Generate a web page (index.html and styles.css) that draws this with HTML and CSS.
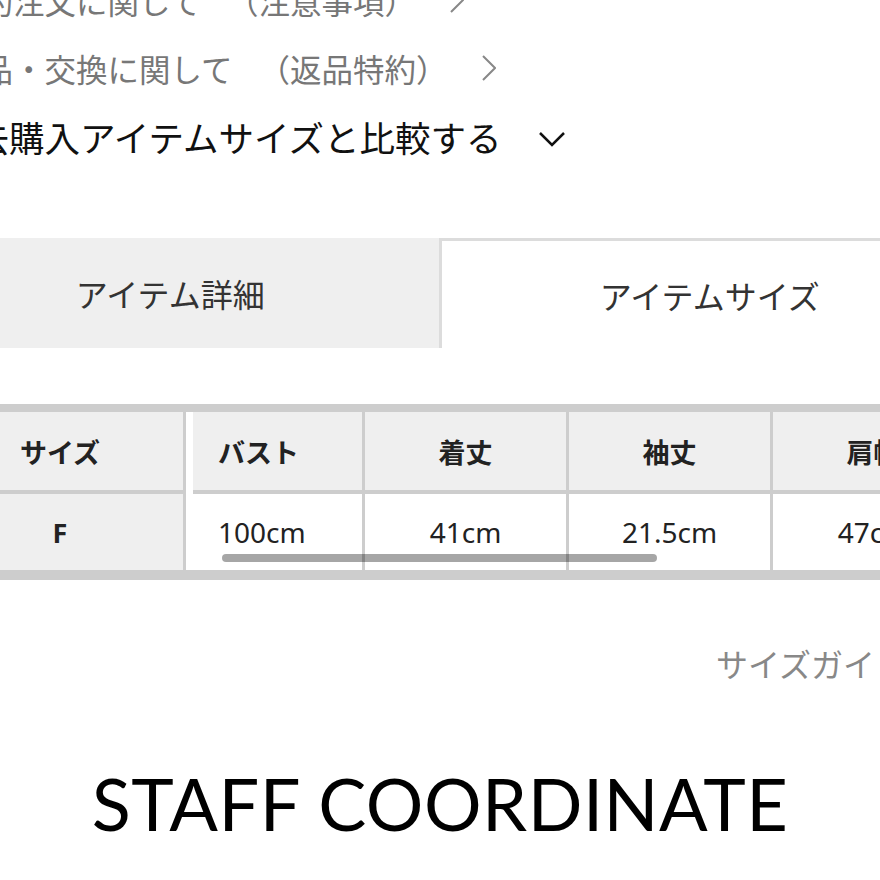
FILE: index.html
```html
<!DOCTYPE html>
<html lang="ja">
<head>
    <meta charset="UTF-8">
    <meta name="viewport" content="width=device-width, initial-scale=1.0">
    <title>アイテムサイズ</title>
    <link rel="stylesheet" href="styles.css">
</head>
<body>
    <div class="page">
        <!-- Notice links -->
        <ul class="notice-list">
            <li class="notice">
                <span>予約注文に関して</span><span class="note">（注意事項）</span>
                <svg class="chev-right" width="14" height="26" viewBox="0 0 14 26"><path d="M1 1 L13 13 L1 25" /></svg>
            </li>
            <li class="notice">
                <span>返品・交換に関して</span><span class="note">（返品特約）</span>
                <svg class="chev-right" width="14" height="26" viewBox="0 0 14 26"><path d="M1 1 L13 13 L1 25" /></svg>
            </li>
            <li class="notice compare">
                <span>過去購入アイテムサイズと比較する</span>
                <svg class="chev-down" width="26" height="15" viewBox="0 0 26 15"><path d="M1 1 L13 13 L25 1" /></svg>
            </li>
        </ul>

        <!-- Tabs -->
        <div class="tabs">
            <div class="tab">アイテム詳細</div>
            <div class="tab active">アイテムサイズ</div>
        </div>

        <!-- Size table -->
        <div class="size-table">
            <div class="fixed-col">
                <div class="cell head">サイズ</div>
                <div class="cell key">F</div>
            </div>
            <div class="scroll-cols">
                <div class="cell head first">バスト</div>
                <div class="cell head">着丈</div>
                <div class="cell head">袖丈</div>
                <div class="cell head">肩幅</div>
                <div class="cell head">身幅</div>

                <div class="cell first">100cm</div>
                <div class="cell">41cm</div>
                <div class="cell">21.5cm</div>
                <div class="cell">47cm</div>
                <div class="cell">50cm</div>
            </div>
            <div class="scrollbar"></div>
        </div>

        <div class="size-guide">
            <span>サイズガイド</span>
            <svg class="chev-right" width="14" height="26" viewBox="0 0 14 26"><path d="M1 1 L13 13 L1 25" /></svg>
        </div>

        <h2 class="section-title">STAFF COORDINATE</h2>
    </div>
</body>
</html>
```

FILE: styles.css
```css
html, body {
    margin: 0;
    overflow: hidden;
    background: #ffffff;
}

body {
    font-family: "Noto Sans", "Noto Sans CJK JP", sans-serif;
    color: #222;
}

.page {
    width: 1076px;
    margin-left: -98px;
    margin-top: -34px;
}

/* notice links */
.notice-list {
    list-style: none;
    margin: 0;
    padding: 0 0 0 48px;
}

.notice {
    display: flex;
    align-items: center;
    height: 68px;
    font-family: "Noto Sans CJK JP", sans-serif;
    font-size: 31.5px;
    color: #777;
    white-space: nowrap;
}

.notice .note {
    margin-left: 26px;
}

.notice .chev-right {
    margin-left: 34px;
}

.chev-right path {
    fill: none;
    stroke: #888;
    stroke-width: 2;
}

.notice.compare {
    margin-left: -12px;
    font-size: 35.5px;
    color: #111;
}

.chev-down {
    margin-left: 38px;
    margin-top: 6px;
}

.chev-down path {
    fill: none;
    stroke: #111;
    stroke-width: 2.5;
}

/* tabs */
.tabs {
    display: flex;
    margin-top: 68px;
    height: 110px;
}

.tab {
    flex: 1;
    display: flex;
    align-items: center;
    justify-content: center;
    background: #efefef;
    font-family: "Noto Sans CJK JP", sans-serif;
    font-size: 32px;
    color: #333;
}

.tab.active {
    background: #ffffff;
    border-top: 3px solid #dcdcdc;
    border-left: 3px solid #dcdcdc;
}

/* size table */
.size-table {
    position: relative;
    display: flex;
    margin-top: 56px;
    margin-left: 35px;
    padding: 8px 0 10px;
    background: #cdcdcd;
}

.fixed-col {
    flex: none;
    width: 246px;
    display: grid;
    grid-template-rows: 78px 76px;
    row-gap: 4px;
    padding-right: 3px;
    border-right: 7px solid #ffffff;
}

.scroll-cols {
    flex: none;
    display: grid;
    grid-template-columns: 169px repeat(4, 201px);
    grid-template-rows: 78px 76px;
    gap: 4px 3px;
}

.cell {
    display: flex;
    align-items: center;
    justify-content: center;
    background: #ffffff;
    font-size: 28px;
    color: #222;
    white-space: nowrap;
}

.cell.head {
    background: #efefef;
    font-family: "Noto Sans CJK JP", sans-serif;
    font-size: 27px;
    font-weight: bold;
}

.cell.key {
    background: #efefef;
    font-weight: bold;
    font-size: 27px;
}

.cell.first {
    justify-content: flex-start;
    padding-left: 25px;
}

.scrollbar {
    position: absolute;
    left: 285px;
    top: 150px;
    width: 435px;
    height: 8px;
    border-radius: 4px;
    background: rgba(0, 0, 0, 0.35);
}

/* size guide */
.size-guide {
    display: flex;
    justify-content: flex-end;
    align-items: center;
    gap: 22px;
    height: 40px;
    margin-top: 63px;
    padding-right: 35px;
    font-family: "Noto Sans CJK JP", sans-serif;
    font-size: 32px;
    color: #888;
}

.section-title {
    margin: 84px 0 0;
    text-align: center;
    font-family: "Lato", sans-serif;
    font-weight: 400;
    font-size: 72px;
    line-height: 1;
    letter-spacing: 0.5px;
    color: #000;
}
```
